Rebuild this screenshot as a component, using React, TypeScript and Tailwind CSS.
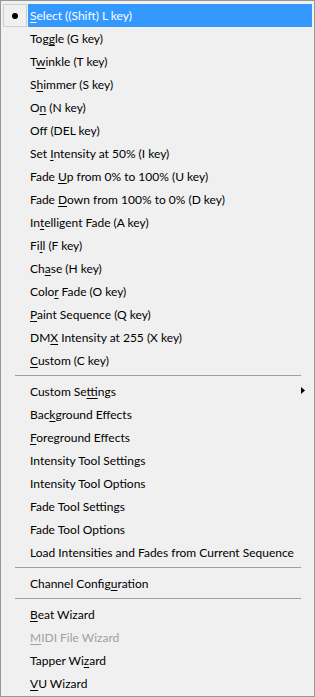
import React from 'react';

type Item = { pre: string; u?: string; post?: string; sub?: boolean; disabled?: boolean; selected?: boolean };

const groups: Item[][] = [
  [
    { pre: '', u: 'S', post: 'elect ((Shift) L key)', selected: true },
    { pre: 'Tog', u: 'g', post: 'le (G key)' },
    { pre: 'T', u: 'w', post: 'inkle (T key)' },
    { pre: 'S', u: 'h', post: 'immer (S key)' },
    { pre: 'O', u: 'n', post: ' (N key)' },
    { pre: 'Of', u: 'f', post: ' (DEL key)' },
    { pre: 'Set ', u: 'I', post: 'ntensity at 50% (I key)' },
    { pre: 'Fade ', u: 'U', post: 'p from 0% to 100% (U key)' },
    { pre: 'Fade ', u: 'D', post: 'own from 100% to 0% (D key)' },
    { pre: 'In', u: 't', post: 'elligent Fade (A key)' },
    { pre: 'Fi', u: 'l', post: 'l (F key)' },
    { pre: 'Ch', u: 'a', post: 'se (H key)' },
    { pre: 'Colo', u: 'r', post: ' Fade (O key)' },
    { pre: '', u: 'P', post: 'aint Sequence (Q key)' },
    { pre: 'DM', u: 'X', post: ' Intensity at 255 (X key)' },
    { pre: '', u: 'C', post: 'ustom (C key)' },
  ],
  [
    { pre: 'Custom Se', u: 't', post: 'tings', sub: true },
    { pre: 'Bac', u: 'k', post: 'ground Effects' },
    { pre: '', u: 'F', post: 'oreground Effects' },
    { pre: 'Intensity Tool Settings' },
    { pre: 'Intensity Tool Options' },
    { pre: 'Fade Tool Settings' },
    { pre: 'Fade Tool Options' },
    { pre: 'Load Intensities and Fades from Current Sequence' },
  ],
  [{ pre: 'Channel Config', u: 'u', post: 'ration' }],
  [
    { pre: '', u: 'B', post: 'eat Wizard' },
    { pre: '', u: 'M', post: 'IDI File Wizard', disabled: true },
    { pre: 'Tapper Wi', u: 'z', post: 'ard' },
    { pre: '', u: 'V', post: 'U Wizard' },
  ],
];

const Row = ({ item }: { item: Item }) => (
  <div className="flex h-[23px] items-stretch">
    <div className="w-[25px] shrink-0 flex">
      {item.selected && (
        <div className="w-[24px] h-[23px] border border-[#cfcfcf] flex items-center justify-center">
          <div className="w-[6px] h-[6px] rounded-full bg-black" />
        </div>
      )}
    </div>
    <div
      className={`flex-1 flex items-center pl-[2px] pt-[1px] relative ${item.selected ? 'bg-[#3399ff] text-white' : ''} ${
        item.disabled ? 'text-[#a0a0a0]' : item.selected ? '' : 'text-black'
      }`}
    >
      <span className="whitespace-pre">
        {item.pre}
        {item.u && <span className="underline underline-offset-[2px]">{item.u}</span>}
        {item.post}
      </span>
      {item.sub && (
        <svg className="absolute left-[273px] top-[7px]" width="4" height="7" viewBox="0 0 4 7">
          <path d="M0 0 L4 3.5 L0 7 Z" fill="#000" />
        </svg>
      )}
    </div>
  </div>
);

export default function App() {
  return (
    <div
      className="w-[315px] h-[697px] border border-[#979797] bg-[#f0f0f0] pt-[3px] pl-[2px] pr-[2px] text-[12px] leading-none"
      style={{ fontFamily: 'Lato, "Noto Sans", sans-serif' }}
    >
      {groups.map((g, gi) => (
        <div key={gi}>
          {gi > 0 && (
            <div className="h-[8px] pt-[3px] pl-[12px] pr-[11px]">
              <div className="h-px bg-[#a0a0a0]" />
            </div>
          )}
          {g.map((item, i) => (
            <Row key={i} item={item} />
          ))}
        </div>
      ))}
    </div>
  );
}
